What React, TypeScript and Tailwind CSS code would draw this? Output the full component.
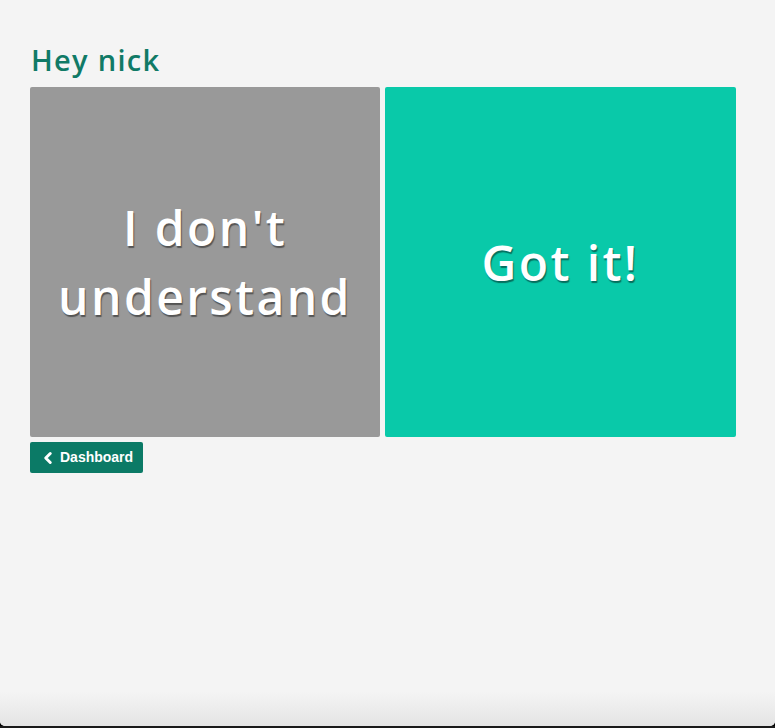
import { ChevronLeft } from "lucide-react";

export default function App(): JSX.Element {
  return (
    <div className="flex flex-col min-h-[728px] bg-black">
      <div className="flex-1 flex flex-col bg-[#f4f4f4] rounded-b-[5px] overflow-hidden">
        <div className="flex-1 px-[30px] pt-[40px]">
          <h1 className="font-['Open_Sans',sans-serif] text-[29px] font-semibold text-[#107a66] leading-[40px] pl-[1px] tracking-[1.3px]">
            Hey nick
          </h1>
          <div className="flex gap-[5px] mt-[7px]">
            <button className="w-[350px] h-[350px] rounded-[2px] bg-[#999999] flex items-center justify-center">
              <span className="font-['Open_Sans',sans-serif] text-[48px] leading-[69px] font-semibold tracking-[2.4px] text-white text-center [text-shadow:1px_2px_1px_rgba(0,0,0,0.45)]">
                I don't
                <br />
                understand
              </span>
            </button>
            <button className="w-[351px] h-[350px] rounded-[2px] bg-[#09c9a9] flex items-center justify-center">
              <span className="font-['Open_Sans',sans-serif] text-[48px] leading-[69px] font-semibold tracking-[2.4px] text-white text-center [text-shadow:1px_2px_1px_rgba(0,0,0,0.45)]">
                Got it!
              </span>
            </button>
          </div>
          <button className="mt-[5px] h-[31px] w-[113px] rounded-[2px] bg-[#0b7a66] flex items-center pl-[9px] gap-[3px] text-white font-['Liberation_Sans',Arial,sans-serif] font-bold text-[14px]">
            <ChevronLeft size={18} strokeWidth={4} />
            Dashboard
          </button>
        </div>
        <div className="h-[34px] bg-gradient-to-b from-[#f4f4f4] to-[#e4e4e4]" />
      </div>
      <div className="h-[2px] bg-[#1a1a1a]" />
    </div>
  );
}
